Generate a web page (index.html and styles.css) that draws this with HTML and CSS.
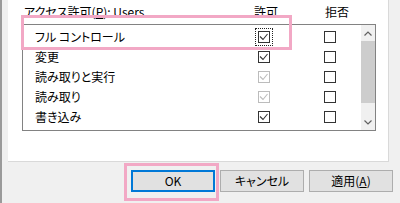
FILE: index.html
```html
<!DOCTYPE html>
<html lang="ja">
<head>
    <meta charset="UTF-8">
    <title>アクセス許可</title>
    <link rel="stylesheet" href="styles.css">
</head>
<body>
    <div class="dialog">
        <div class="panel">
            <div class="perm-head">
                <span class="perm-title">アクセス許可(<u>P</u>): Users</span>
                <span class="col-title">許可</span>
                <span class="col-title">拒否</span>
            </div>
            <div class="perm-list">
                <div class="rows">
                    <div class="row">
                        <span class="name">フル コントロール</span>
                        <span class="cell"><span class="check focus"><svg viewBox="0 0 10 10"><path d="M1 4.5 L4 7.5 L8.5 2"/></svg></span></span>
                        <span class="cell deny"><span class="check"></span></span>
                    </div>
                    <div class="row">
                        <span class="name">変更</span>
                        <span class="cell"><span class="check"><svg viewBox="0 0 10 10"><path d="M1 4.5 L4 7.5 L8.5 2"/></svg></span></span>
                        <span class="cell deny"><span class="check"></span></span>
                    </div>
                    <div class="row">
                        <span class="name">読み取りと実行</span>
                        <span class="cell"><span class="check disabled"><svg viewBox="0 0 10 10"><path d="M1 4.5 L4 7.5 L8.5 2"/></svg></span></span>
                        <span class="cell deny"><span class="check"></span></span>
                    </div>
                    <div class="row">
                        <span class="name">読み取り</span>
                        <span class="cell"><span class="check disabled"><svg viewBox="0 0 10 10"><path d="M1 4.5 L4 7.5 L8.5 2"/></svg></span></span>
                        <span class="cell deny"><span class="check"></span></span>
                    </div>
                    <div class="row">
                        <span class="name">書き込み</span>
                        <span class="cell"><span class="check"><svg viewBox="0 0 10 10"><path d="M1 4.5 L4 7.5 L8.5 2"/></svg></span></span>
                        <span class="cell deny"><span class="check"></span></span>
                    </div>
                </div>
                <div class="scrollbar">
                    <div class="sb-btn"><svg viewBox="0 0 8 5"><polyline points="0.5,4.5 4,1 7.5,4.5"/></svg></div>
                    <div class="sb-thumb"></div>
                    <div class="sb-track"></div>
                    <div class="sb-btn"><svg viewBox="0 0 8 5"><polyline points="0.5,0.5 4,4 7.5,0.5"/></svg></div>
                </div>
            </div>
        </div>
        <div class="buttons">
            <button class="btn default">OK</button>
            <button class="btn">キャンセル</button>
            <button class="btn">適用(<u>A</u>)</button>
        </div>
    </div>

    <div class="mark mark-row"></div>
    <div class="mark mark-ok"></div>
</body>
</html>
```

FILE: styles.css
```css
body {
    margin: 0;
    width: 400px;
    height: 203px;
    overflow: hidden;
    background-color: #f0f0f0;
    font-family: "Noto Sans CJK JP", "Noto Sans", sans-serif;
    font-size: 12px;
    font-feature-settings: "palt";
    color: #000;
    position: relative;
}
.dialog {
    height: 203px;
    border-left: 2px solid #9a9a9a;
}
.panel {
    margin-left: 6px;
    width: 366px;
    height: 161px;
    padding-left: 14px;
    background-color: #fff;
    border-right: 1px solid #d9d9d9;
    border-bottom: 1px solid #d9d9d9;
}
.perm-head {
    display: grid;
    grid-template-columns: 232px 71px auto;
    height: 24px;
    line-height: 16px;
    padding-top: 4px;
    box-sizing: border-box;
}
.perm-title {
    padding-left: 2px;
}
.perm-list {
    display: flex;
    width: 354px;
    height: 107px;
    border: 1px solid #828282;
    box-sizing: border-box;
}
.rows {
    flex: 1;
    padding-top: 2px;
}
.row {
    display: grid;
    grid-template-columns: 223px 36px 30px 36px;
    height: 20px;
    align-items: center;
    line-height: 16px;
}
.name {
    padding-left: 12px;
}
.cell {
    display: flex;
    justify-content: center;
}
.cell.deny {
    grid-column: 4;
}
.check {
    width: 12px;
    height: 12px;
    border: 1px solid #333;
    box-sizing: border-box;
    background-color: #fff;
    display: block;
}
.check svg {
    display: block;
    width: 10px;
    height: 10px;
    fill: none;
    stroke: #333;
    stroke-width: 1.1;
}
.check.disabled {
    border-color: #bcbcbc;
}
.check.disabled svg {
    stroke: #bcbcbc;
}
.check.focus {
    outline: 1px dotted #222;
    outline-offset: 2px;
}
.scrollbar {
    width: 14px;
    display: flex;
    flex-direction: column;
    background-color: #f0f0f0;
}
.sb-btn {
    height: 16px;
    display: flex;
    align-items: center;
    justify-content: center;
}
.sb-btn svg {
    width: 8px;
    height: 5px;
    fill: none;
    stroke: #606060;
    stroke-width: 1.2;
}
.sb-thumb {
    height: 62px;
    background-color: #cdcdcd;
}
.sb-track {
    flex: 1;
}
.buttons {
    display: flex;
    justify-content: flex-end;
    gap: 5px;
    padding: 8px 7px 0 0;
}
.btn {
    width: 84px;
    height: 22px;
    padding: 0;
    background-color: #e1e1e1;
    border: 1px solid #adadad;
    font-family: inherit;
    font-size: 12px;
    font-feature-settings: "palt";
    color: #000;
    line-height: 18px;
}
.btn.default {
    border: 2px solid #0078d7;
}
.mark {
    position: absolute;
    border: 3px solid #f2a8c5;
    box-sizing: border-box;
}
.mark-row {
    left: 21px;
    top: 15px;
    width: 271px;
    height: 35px;
}
.mark-ok {
    left: 124px;
    top: 163px;
    width: 95px;
    height: 38px;
}
```
